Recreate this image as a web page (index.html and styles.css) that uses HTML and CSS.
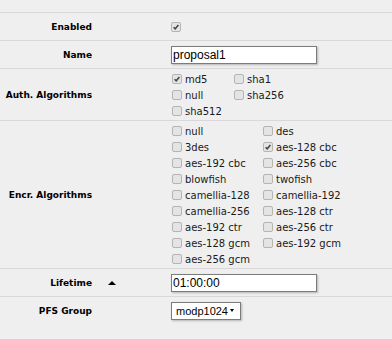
FILE: index.html
```html
<!DOCTYPE html>
<html lang="en">
<head>
    <meta charset="UTF-8">
    <title>IPsec Proposal</title>
    <link rel="stylesheet" href="styles.css">
</head>
<body>

<div class="form">
    <div class="row top"></div>

    <div class="row">
        <div class="label">Enabled</div>
        <div class="extra"></div>
        <div class="value">
            <span class="cb checked"><svg viewBox="0 0 8 8"><path d="M1.6 4.2 L3.2 5.8 L6.4 2" /></svg></span>
        </div>
    </div>

    <div class="row">
        <div class="label">Name</div>
        <div class="extra"></div>
        <div class="value">
            <input type="text" class="text-input" value="proposal1">
        </div>
    </div>

    <div class="row">
        <div class="label">Auth. Algorithms</div>
        <div class="extra"></div>
        <div class="value">
            <div class="checks auth">
                <label class="item"><span class="cb checked"><svg viewBox="0 0 8 8"><path d="M1.6 4.2 L3.2 5.8 L6.4 2" /></svg></span>md5</label>
                <label class="item"><span class="cb"></span>sha1</label>
                <label class="item"><span class="cb"></span>null</label>
                <label class="item"><span class="cb"></span>sha256</label>
                <label class="item"><span class="cb"></span>sha512</label>
            </div>
        </div>
    </div>

    <div class="row">
        <div class="label">Encr. Algorithms</div>
        <div class="extra"></div>
        <div class="value">
            <div class="checks encr">
                <label class="item"><span class="cb"></span>null</label>
                <label class="item"><span class="cb"></span>des</label>
                <label class="item"><span class="cb"></span>3des</label>
                <label class="item"><span class="cb checked"><svg viewBox="0 0 8 8"><path d="M1.6 4.2 L3.2 5.8 L6.4 2" /></svg></span>aes-128 cbc</label>
                <label class="item"><span class="cb"></span>aes-192 cbc</label>
                <label class="item"><span class="cb"></span>aes-256 cbc</label>
                <label class="item"><span class="cb"></span>blowfish</label>
                <label class="item"><span class="cb"></span>twofish</label>
                <label class="item"><span class="cb"></span>camellia-128</label>
                <label class="item"><span class="cb"></span>camellia-192</label>
                <label class="item"><span class="cb"></span>camellia-256</label>
                <label class="item"><span class="cb"></span>aes-128 ctr</label>
                <label class="item"><span class="cb"></span>aes-192 ctr</label>
                <label class="item"><span class="cb"></span>aes-256 ctr</label>
                <label class="item"><span class="cb"></span>aes-128 gcm</label>
                <label class="item"><span class="cb"></span>aes-192 gcm</label>
                <label class="item"><span class="cb"></span>aes-256 gcm</label>
            </div>
        </div>
    </div>

    <div class="row">
        <div class="label">Lifetime</div>
        <div class="extra"><span class="arrow-up"></span></div>
        <div class="value">
            <input type="text" class="text-input" value="01:00:00">
        </div>
    </div>

    <div class="row last">
        <div class="label">PFS Group</div>
        <div class="extra"></div>
        <div class="value">
            <span class="select">modp1024<span class="select-arrow"></span></span>
        </div>
    </div>
</div>

</body>
</html>
```

FILE: styles.css
```css
body {
    margin: 0;
    background-color: #efefef;
    font-family: "DejaVu Sans", Verdana, sans-serif;
    color: #000;
}

.row {
    display: flex;
    min-height: 27px;
    border-bottom: 1px solid #d8d8d8;
}

.row.top {
    min-height: 12px;
}

.row.last {
    border-bottom: none;
}

.label {
    width: 92px;
    flex: none;
    display: flex;
    align-items: center;
    justify-content: flex-end;
    font-size: 9px;
    font-weight: bold;
    white-space: nowrap;
}

.extra {
    width: 79px;
    flex: none;
    display: flex;
    align-items: center;
    padding-left: 16px;
    box-sizing: border-box;
}

.value {
    display: flex;
    align-items: center;
}

/* checkboxes */
.cb {
    display: inline-block;
    width: 8px;
    height: 8px;
    border: 1px solid #b4b4b4;
    border-radius: 2px;
    background-color: #e4e4e4;
    box-sizing: content-box;
    flex: none;
}

.cb svg {
    display: block;
    width: 8px;
    height: 8px;
}

.cb svg path {
    fill: none;
    stroke: #444;
    stroke-width: 1.5;
}

.checks {
    display: grid;
    grid-auto-rows: 16px;
    padding: 2px 0 1px 1px;
}

.checks.auth {
    grid-template-columns: 62px 62px;
}

.checks.encr {
    grid-template-columns: 91px 91px;
}

.item {
    display: flex;
    align-items: center;
    gap: 3px;
    font-size: 10px;
    color: #1a1a1a;
    white-space: nowrap;
}

/* inputs */
.text-input {
    width: 146px;
    height: 18px;
    box-sizing: border-box;
    margin: 0;
    padding: 0 1px;
    border: 1px solid #7c7c7c;
    background-color: white;
    box-shadow: 1px 1px 2px rgba(0, 0, 0, 0.25);
    font-family: "Liberation Sans", Arial, sans-serif;
    font-size: 12px;
    color: #000;
    outline: none;
}

.select {
    display: inline-flex;
    align-items: center;
    width: 70px;
    height: 18px;
    box-sizing: border-box;
    padding-left: 4px;
    border: 1px solid #7c7c7c;
    background-color: white;
    box-shadow: 1px 1px 2px rgba(0, 0, 0, 0.25);
    font-family: "Liberation Sans", Arial, sans-serif;
    font-size: 11px;
}

.select-arrow {
    margin-left: auto;
    margin-right: 6px;
    width: 0;
    height: 0;
    border-left: 2px solid transparent;
    border-right: 2px solid transparent;
    border-top: 3px solid #000;
}

.arrow-up {
    width: 0;
    height: 0;
    border-left: 4px solid transparent;
    border-right: 4px solid transparent;
    border-bottom: 4px solid #000;
}
```
